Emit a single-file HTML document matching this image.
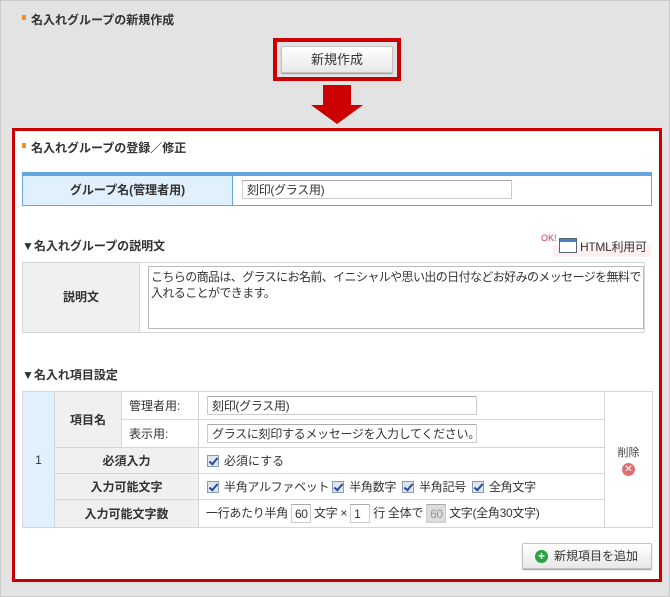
<!DOCTYPE html><html><head><meta charset="utf-8"><style>
*{box-sizing:border-box;margin:0;padding:0}
body{width:670px;height:597px;background:#e3e3e3;font-family:"Liberation Sans","Noto Sans CJK JP",sans-serif;font-size:12px;color:#333;position:relative;overflow:hidden;border:1px solid #ccc}
.a{position:absolute}
.h{font-weight:bold;font-size:12px;color:#333}
.sq{display:inline-block;width:4px;height:5px;background:#f09020;margin-right:5px;vertical-align:4px}
td{border:1px solid #d6d6d6;font-size:12px;white-space:nowrap}
.lab{background:#f0f0f0;font-weight:bold;text-align:center}
.inp{border:1px solid #ccc;border-top-color:#aaa;background:#fff;height:19px;padding:1px 4px;font-size:12px;line-height:16px;display:inline-block;vertical-align:middle;white-space:nowrap;overflow:hidden;letter-spacing:-0.3px}
.cb{display:inline-block;width:12px;height:12px;border:1px solid #8a9ab0;background:#dde6f2;vertical-align:-2px;margin-right:5px;position:relative}
.cb:after{content:"";position:absolute;left:3px;top:0;width:3px;height:7px;border:solid #2a4a9a;border-width:0 2px 2px 0;transform:rotate(40deg)}
</style></head><body>
<div class="a h" style="left:21px;top:10px"><span class="sq"></span>名入れグループの新規作成</div>
<div class="a" style="left:272px;top:37px;width:128px;height:43px;border:4px solid #cc0000"></div>
<div class="a" style="left:280px;top:45px;width:112px;height:27px;border:1px solid #c4c4c4;border-radius:2px;background:linear-gradient(#fff,#e8e8e8);text-align:center;line-height:25px;font-size:13px;box-shadow:0 1px 1px #999">新規作成</div>
<div class="a" style="left:322px;top:84px;width:28px;height:21px;background:#cc0000"></div>
<div class="a" style="left:310px;top:104px;width:0;height:0;border-left:26px solid transparent;border-right:26px solid transparent;border-top:19px solid #cc0000"></div>
<div class="a" style="left:11px;top:127px;width:650px;height:454px;border:3px solid #cc0000;background:#fff"></div>
<div class="a h" style="left:21px;top:138px"><span class="sq"></span>名入れグループの登録／修正</div>
<div class="a" style="left:21px;top:171px;width:630px;height:34px;border:1px solid #64a6e0;border-top:4px solid #64a6e0">
<div class="a" style="left:0;top:0;width:210px;height:29px;background:#e0f0fc;border-right:1px solid #64a6e0;font-weight:bold;text-align:center;line-height:29px">グループ名(管理者用)</div>
<div class="a inp" style="left:219px;top:4px;width:270px">刻印(グラス用)</div></div>
<div class="a h" style="left:21px;top:236px">▼名入れグループの説明文</div>
<div class="a" style="left:552px;top:244px;width:98px;height:12px;background:#fde8ea;opacity:.7"></div>
<div class="a" style="left:540px;top:232px;font-size:9px;color:#e03060">OK!</div>
<div class="a" style="left:558px;top:237px;width:18px;height:15px;border:1px solid #567;background:#fff"><div style="height:3px;background:#4a80c8"></div></div>
<div class="a" style="left:579px;top:237px;font-size:12px;letter-spacing:-0.3px">HTML利用可</div>
<div class="a" style="left:21px;top:261px;width:623px;height:71px;border:1px solid #d6d6d6">
<div class="a lab" style="left:0;top:0;width:117px;height:69px;line-height:69px;border-right:1px solid #d6d6d6">説明文</div>
<div class="a" style="left:125px;top:3px;width:496px;height:63px;border:1px solid #bbb;padding:2px 2px;font-size:12px;line-height:16px;letter-spacing:-0.6px">こちらの商品は、グラスにお名前、イニシャルや思い出の日付などお好みのメッセージを無料で入れることができます。</div></div>
<div class="a h" style="left:21px;top:365px">▼名入れ項目設定</div>
<table class="a" style="left:21px;top:390px;width:631px;border-collapse:collapse;table-layout:fixed">
<tr style="height:28px"><td rowspan="5" style="width:32px;background:#e0f0fc;text-align:center">1</td><td rowspan="2" class="lab" style="width:67px">項目名</td><td style="width:77px;padding-left:7px">管理者用:</td><td style="width:406px;padding-left:8px"><span class="inp" style="width:270px">刻印(グラス用)</span></td><td rowspan="5" style="text-align:center;font-size:11px;color:#444">削除<br><span style="display:inline-block;width:13px;height:13px;border-radius:50%;background:#e07070;color:#fff;font-size:10px;line-height:13px;margin-top:3px">✕</span></td></tr>
<tr style="height:28px"><td style="padding-left:7px">表示用:</td><td style="padding-left:8px"><span class="inp" style="width:270px">グラスに刻印するメッセージを入力してください。</span></td></tr>
<tr style="height:26px"><td colspan="2" class="lab">必須入力</td><td style="padding-left:8px"><span class="cb"></span>必須にする</td></tr>
<tr style="height:26px"><td colspan="2" class="lab">入力可能文字</td><td style="padding-left:8px;letter-spacing:-0.3px"><span class="cb"></span>半角アルファベット <span class="cb"></span>半角数字 &nbsp;<span class="cb"></span>半角記号 &nbsp;<span class="cb"></span>全角文字</td></tr>
<tr style="height:28px"><td colspan="2" class="lab">入力可能文字数</td><td style="padding-left:7px;letter-spacing:-0.3px">一行あたり半角 <span class="inp" style="width:20px;padding:1px 3px">60</span> 文字 × <span class="inp" style="width:20px;padding:1px 3px">1</span> 行 全体で <span class="inp" style="width:20px;padding:1px 3px;background:#ddd;color:#999">60</span> 文字(全角30文字)</td></tr>
</table>
<div class="a" style="left:521px;top:542px;width:130px;height:26px;border:1px solid #c4c4c4;border-radius:2px;background:linear-gradient(#fff,#e8e8e8);box-shadow:0 1px 1px #999;line-height:24px;font-size:12px;padding-left:12px;white-space:nowrap"><span style="display:inline-block;width:13px;height:13px;border-radius:50%;background:#2aa040;color:#fff;font-weight:bold;text-align:center;line-height:13px;font-size:12px;margin-right:6px">+</span>新規項目を追加</div>
</body></html>
